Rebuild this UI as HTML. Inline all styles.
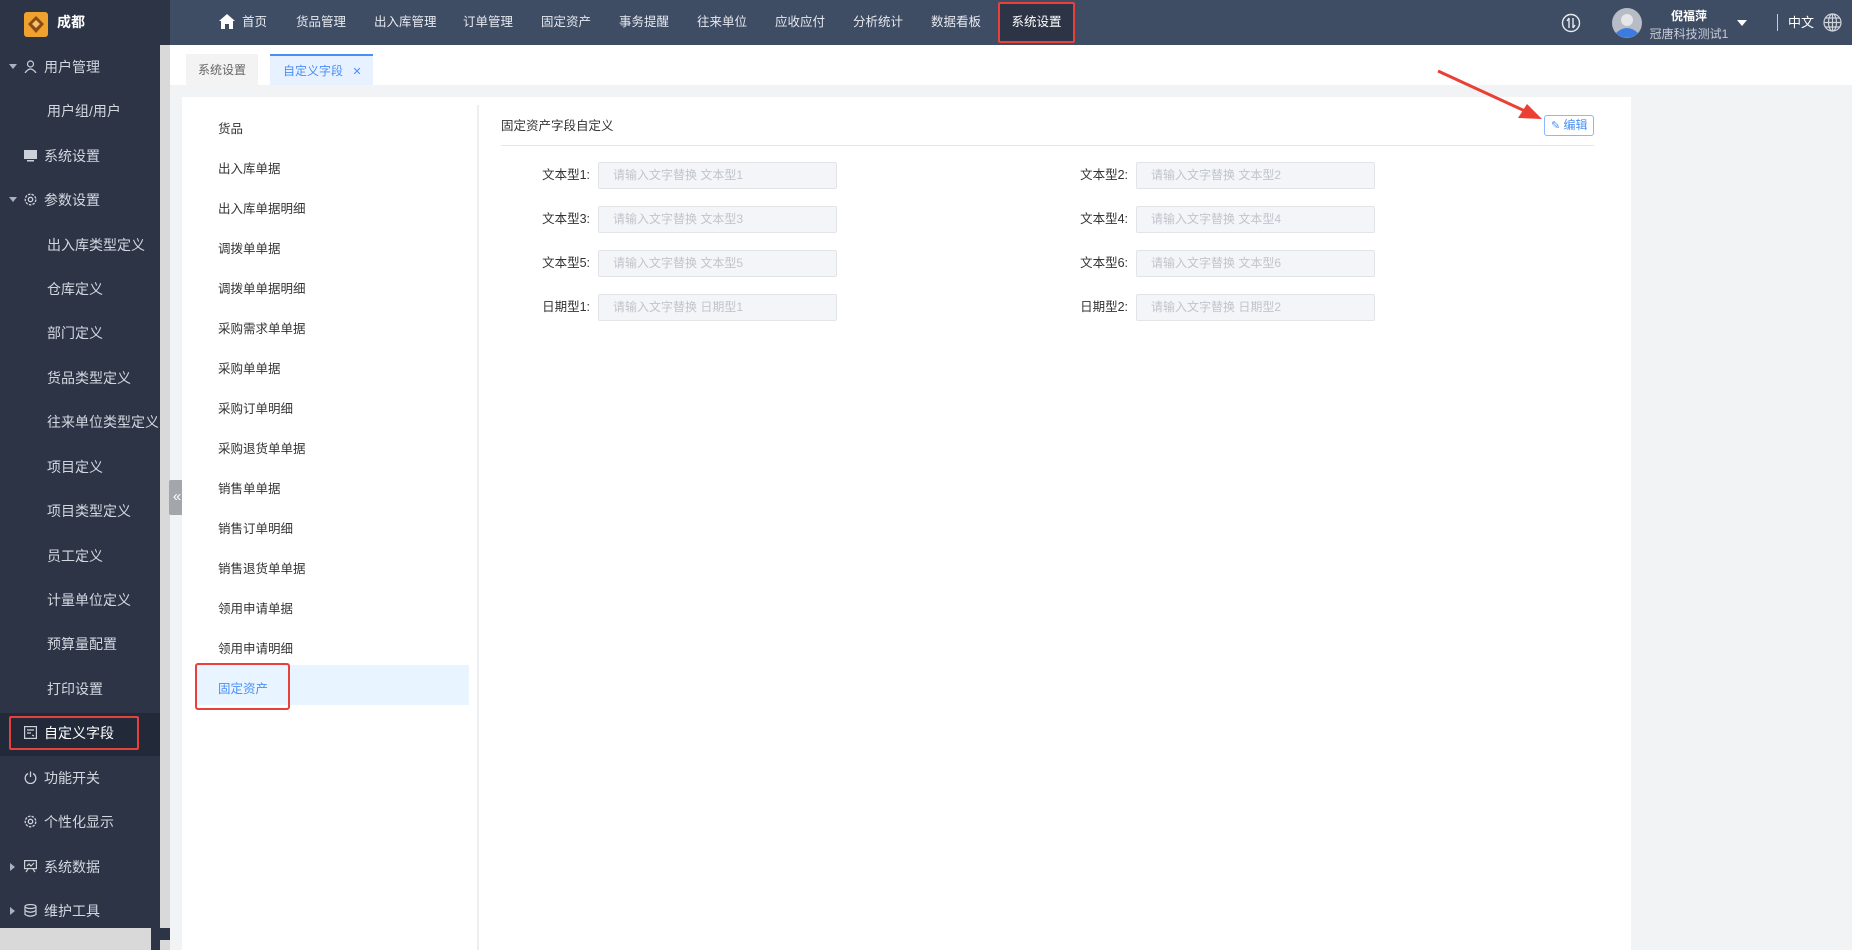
<!DOCTYPE html>
<html><head><meta charset="utf-8">
<style>
*{margin:0;padding:0;box-sizing:border-box}
body{width:1852px;height:950px;overflow:hidden;background:#f2f3f5;font-family:"Liberation Sans","Noto Sans CJK SC",sans-serif;position:relative;font-size:13px}
.abs{position:absolute}
#top{left:0;top:0;width:1852px;height:45px;background:#3e4c64}
#logo{left:0;top:0;width:170px;height:45px;background:#2c3446}
#side{left:0;top:45px;width:160px;height:905px;background:#2c3446}
.strip{left:160px;top:45px;width:10px;height:905px;background:#d9d9d9}
.nav{top:0;height:45px;line-height:45px;color:#e6e9ef;font-size:12.5px;white-space:nowrap}
.si{position:absolute;left:0;width:160px;height:44px;line-height:44px;color:#d3d8e0;font-size:14px;white-space:nowrap}
.si .ic{position:absolute;left:24px;top:15px;width:13px;height:13px}
.si .tri{position:absolute;left:9px;top:19px;width:0;height:0;border-left:4px solid transparent;border-right:4px solid transparent;border-top:5px solid #aab2c0}
.si .trir{position:absolute;left:10px;top:18px;width:0;height:0;border-top:4px solid transparent;border-bottom:4px solid transparent;border-left:5px solid #aab2c0}
.li{position:absolute;left:218px;font-size:12.5px;color:#333;white-space:nowrap}
.lab{position:absolute;width:100px;text-align:right;font-size:12.5px;color:#333}
.inp{position:absolute;width:239px;height:27px;background:#f4f5f8;border:1px solid #e2e4e8;border-radius:2px;color:#c0c4cc;font-size:12px;line-height:25px;padding-left:14px;white-space:nowrap}
</style></head><body>
<div id="top" class="abs"></div>
<div id="logo" class="abs"></div>
<div class="abs" style="left:24px;top:12px;width:24px;height:25px;background:#f0a22e;border-radius:3px"></div>
<svg class="abs" style="left:24px;top:12px" width="24" height="25"><path d="M12 4 L20 12 L12 21 L4 12Z" fill="#8a4b14"/><path d="M12 8 L16 12 L12 16 L8 12Z" fill="#f6c26b"/></svg>
<div class="abs" style="left:57px;top:0;line-height:45px;color:#fff;font-size:14px;font-weight:bold">成都</div>

<svg class="abs" style="left:219px;top:14px" width="16" height="15"><path d="M8 0 L16 7 L14 7 L14 15 L10 15 L10 10 L6 10 L6 15 L2 15 L2 7 L0 7Z" fill="#fff"/></svg>
<div class="abs nav" style="left:242px">首页</div>
<div class="abs nav" style="left:296px">货品管理</div>
<div class="abs nav" style="left:374px">出入库管理</div>
<div class="abs nav" style="left:463px">订单管理</div>
<div class="abs nav" style="left:541px">固定资产</div>
<div class="abs nav" style="left:619px">事务提醒</div>
<div class="abs nav" style="left:697px">往来单位</div>
<div class="abs nav" style="left:775px">应收应付</div>
<div class="abs nav" style="left:853px">分析统计</div>
<div class="abs nav" style="left:931px">数据看板</div>
<div class="abs" style="left:998px;top:2px;width:77px;height:41px;background:#2c3446;border:2px solid #e8403a;border-radius:2px;color:#fff;text-align:center;line-height:37px;font-size:12.5px">系统设置</div>

<svg class="abs" style="left:1561px;top:13px" width="20" height="20"><circle cx="10" cy="10" r="8.5" fill="none" stroke="#e6e9ef" stroke-width="1.4"/><path d="M8 5 V15 M12 5 V15 M8 5 L6 8 M12 15 L14 12" stroke="#e6e9ef" stroke-width="1.4" fill="none"/></svg>
<svg class="abs" style="left:1612px;top:8px" width="30" height="30"><circle cx="15" cy="15" r="15" fill="#b8bcc6"/><circle cx="15" cy="12" r="6" fill="#e4e6ea"/><path d="M4 25 Q15 15 26 25 A15 15 0 0 1 4 25Z" fill="#3d7be0"/></svg>
<div class="abs" style="left:1644px;top:7px;width:90px;text-align:center;color:#fff;font-size:12px;font-weight:bold">倪福萍</div>
<div class="abs" style="left:1644px;top:25px;width:90px;text-align:center;color:#c8cdd6;font-size:12px;white-space:nowrap">冠唐科技测试1</div>
<div class="abs" style="left:1737px;top:20px;border-left:5px solid transparent;border-right:5px solid transparent;border-top:6px solid #fff"></div>
<div class="abs" style="left:1777px;top:14px;width:1px;height:17px;background:#c8cdd6"></div>
<div class="abs" style="left:1788px;top:0;line-height:45px;color:#fff;font-size:13px">中文</div>
<svg class="abs" style="left:1823px;top:13px" width="19" height="19" fill="none" stroke="#d0d4db" stroke-width="1.2"><circle cx="9.5" cy="9.5" r="8.5"/><ellipse cx="9.5" cy="9.5" rx="4" ry="8.5"/><path d="M1 9.5H18M2.5 5H16.5M2.5 14H16.5M9.5 1V18"/></svg>

<div id="side" class="abs"></div>
<div class="strip abs"></div>
<div class="abs" style="left:0;top:928px;width:151px;height:22px;background:#d9d9d9"></div>
<div class="abs" style="left:151px;top:928px;width:19px;height:12px;background:#2c3446"></div>
<div class="abs" style="left:0;top:713px;width:160px;height:43px;background:#222a39"></div>
<div class="abs" style="left:9px;top:716px;width:130px;height:34px;border:2px solid #e8403a;border-radius:2px"></div>

<div class="si" style="top:45px"><span class="tri"></span><svg class="ic" viewBox="0 0 13 13" fill="none" stroke="#cdd2da" stroke-width="1.2"><circle cx="6.5" cy="4" r="3"/><path d="M1 13 Q6.5 5 12 13"/></svg><span style="position:absolute;left:44px">用户管理</span></div>
<div class="si" style="top:89px"><span style="position:absolute;left:47px">用户组/用户</span></div>
<div class="si" style="top:134px"><svg class="ic" viewBox="0 0 13 13"><rect x="0" y="1" width="13" height="9" fill="#cdd2da"/><rect x="3" y="11" width="7" height="1.5" fill="#cdd2da"/></svg><span style="position:absolute;left:44px">系统设置</span></div>
<div class="si" style="top:178px"><span class="tri"></span><svg class="ic" viewBox="0 0 13 13" fill="none" stroke="#cdd2da" stroke-width="1.3"><circle cx="6.5" cy="6.5" r="2.2"/><circle cx="6.5" cy="6.5" r="5.3" stroke-dasharray="2.5 1.2"/></svg><span style="position:absolute;left:44px">参数设置</span></div>
<div class="si" style="top:223px"><span style="position:absolute;left:47px">出入库类型定义</span></div>
<div class="si" style="top:267px"><span style="position:absolute;left:47px">仓库定义</span></div>
<div class="si" style="top:311px"><span style="position:absolute;left:47px">部门定义</span></div>
<div class="si" style="top:356px"><span style="position:absolute;left:47px">货品类型定义</span></div>
<div class="si" style="top:400px"><span style="position:absolute;left:47px">往来单位类型定义</span></div>
<div class="si" style="top:445px"><span style="position:absolute;left:47px">项目定义</span></div>
<div class="si" style="top:489px"><span style="position:absolute;left:47px">项目类型定义</span></div>
<div class="si" style="top:534px"><span style="position:absolute;left:47px">员工定义</span></div>
<div class="si" style="top:578px"><span style="position:absolute;left:47px">计量单位定义</span></div>
<div class="si" style="top:622px"><span style="position:absolute;left:47px">预算量配置</span></div>
<div class="si" style="top:667px"><span style="position:absolute;left:47px">打印设置</span></div>
<div class="si" style="top:711px;color:#fff"><svg class="ic" viewBox="0 0 13 13" fill="none" stroke="#cdd2da" stroke-width="1.2"><rect x="0.6" y="0.6" width="11.8" height="11.8"/><path d="M3 4H10M3 7H7M8 9L10 10"/></svg><span style="position:absolute;left:44px">自定义字段</span></div>
<div class="si" style="top:756px"><svg class="ic" viewBox="0 0 13 13" fill="none" stroke="#cdd2da" stroke-width="1.3"><path d="M4 2.5 A5.3 5.3 0 1 0 9 2.5"/><path d="M6.5 0.5V6"/></svg><span style="position:absolute;left:44px">功能开关</span></div>
<div class="si" style="top:800px"><svg class="ic" viewBox="0 0 13 13" fill="none" stroke="#cdd2da" stroke-width="1.3"><circle cx="6.5" cy="6.5" r="2.2"/><circle cx="6.5" cy="6.5" r="5.3" stroke-dasharray="2.5 1.2"/></svg><span style="position:absolute;left:44px">个性化显示</span></div>
<div class="si" style="top:845px"><span class="trir"></span><svg class="ic" viewBox="0 0 13 13" fill="none" stroke="#cdd2da" stroke-width="1.2"><rect x="0.6" y="0.6" width="11.8" height="8"/><path d="M3 6L5 4L7 6L10 3M4 9L2 12M9 9L11 12"/></svg><span style="position:absolute;left:44px">系统数据</span></div>
<div class="si" style="top:889px"><span class="trir"></span><svg class="ic" viewBox="0 0 13 13" fill="none" stroke="#cdd2da" stroke-width="1.2"><ellipse cx="6.5" cy="2.5" rx="5.5" ry="2"/><path d="M1 2.5V10.5Q6.5 14 12 10.5V2.5M1 6.5Q6.5 10 12 6.5"/></svg><span style="position:absolute;left:44px">维护工具</span></div>

<div class="abs" style="left:169px;top:480px;width:16px;height:35px;background:#a3a6ab;border-radius:2px 0 0 2px;color:#fff;font-size:15px;line-height:33px;text-align:center">«</div>

<div class="abs" style="left:170px;top:45px;width:1682px;height:40px;background:#fff"></div>
<div class="abs" style="left:186px;top:54px;width:72px;height:31px;background:#f3f3f3;color:#666;font-size:12px;line-height:33px;text-align:center">系统设置</div>
<div class="abs" style="left:270px;top:54px;width:103px;height:31px;background:#e8f1ff;border-top:2px solid #4a8ff7;color:#4a8ff7;font-size:12px;line-height:31px;padding-left:13px">自定义字段 <span style="margin-left:6px;font-size:11px">✕</span></div>

<div class="abs" style="left:182px;top:97px;width:1449px;height:853px;background:#fff"></div>
<div class="abs" style="left:477px;top:105px;width:2px;height:845px;background:#eceef1"></div>
<div class="abs" style="left:196px;top:665px;width:273px;height:40px;background:#e8f4ff"></div>
<div class="abs" style="left:195px;top:663px;width:95px;height:47px;border:2px solid #e8403a;border-radius:3px"></div>
<div class="li" style="top:118px">货品</div>
<div class="li" style="top:158px">出入库单据</div>
<div class="li" style="top:198px">出入库单据明细</div>
<div class="li" style="top:238px">调拨单单据</div>
<div class="li" style="top:278px">调拨单单据明细</div>
<div class="li" style="top:318px">采购需求单单据</div>
<div class="li" style="top:358px">采购单单据</div>
<div class="li" style="top:398px">采购订单明细</div>
<div class="li" style="top:438px">采购退货单单据</div>
<div class="li" style="top:478px">销售单单据</div>
<div class="li" style="top:518px">销售订单明细</div>
<div class="li" style="top:558px">销售退货单单据</div>
<div class="li" style="top:598px">领用申请单据</div>
<div class="li" style="top:638px">领用申请明细</div>
<div class="li" style="top:678px;color:#4a8ff7">固定资产</div>

<div class="abs" style="left:501px;top:115px;font-size:12.5px;color:#333">固定资产字段自定义</div>
<div class="abs" style="left:501px;top:145px;width:1093px;height:1px;background:#e4e6ea"></div>
<div class="abs" style="left:1544px;top:115px;width:50px;height:21px;border:1px solid #8db7f9;border-radius:3px;color:#4a8ff7;font-size:12px;line-height:19px;padding-left:6px;white-space:nowrap"><span style="font-size:11px">✎</span> 编辑</div>

<div class="lab" style="left:490px;top:164px">文本型1:</div><div class="inp" style="left:598px;top:162px">请输入文字替换 文本型1</div>
<div class="lab" style="left:1028px;top:164px">文本型2:</div><div class="inp" style="left:1136px;top:162px">请输入文字替换 文本型2</div>
<div class="lab" style="left:490px;top:208px">文本型3:</div><div class="inp" style="left:598px;top:206px">请输入文字替换 文本型3</div>
<div class="lab" style="left:1028px;top:208px">文本型4:</div><div class="inp" style="left:1136px;top:206px">请输入文字替换 文本型4</div>
<div class="lab" style="left:490px;top:252px">文本型5:</div><div class="inp" style="left:598px;top:250px">请输入文字替换 文本型5</div>
<div class="lab" style="left:1028px;top:252px">文本型6:</div><div class="inp" style="left:1136px;top:250px">请输入文字替换 文本型6</div>
<div class="lab" style="left:490px;top:296px">日期型1:</div><div class="inp" style="left:598px;top:294px">请输入文字替换 日期型1</div>
<div class="lab" style="left:1028px;top:296px">日期型2:</div><div class="inp" style="left:1136px;top:294px">请输入文字替换 日期型2</div>

<svg class="abs" style="left:0;top:0" width="1852" height="950" pointer-events="none"><path d="M1438 71 L1525 111" stroke="#ea3f33" stroke-width="3"/><path d="M1542 119 L1518 118 L1527 104Z" fill="#ea3f33"/></svg>
</body></html>
